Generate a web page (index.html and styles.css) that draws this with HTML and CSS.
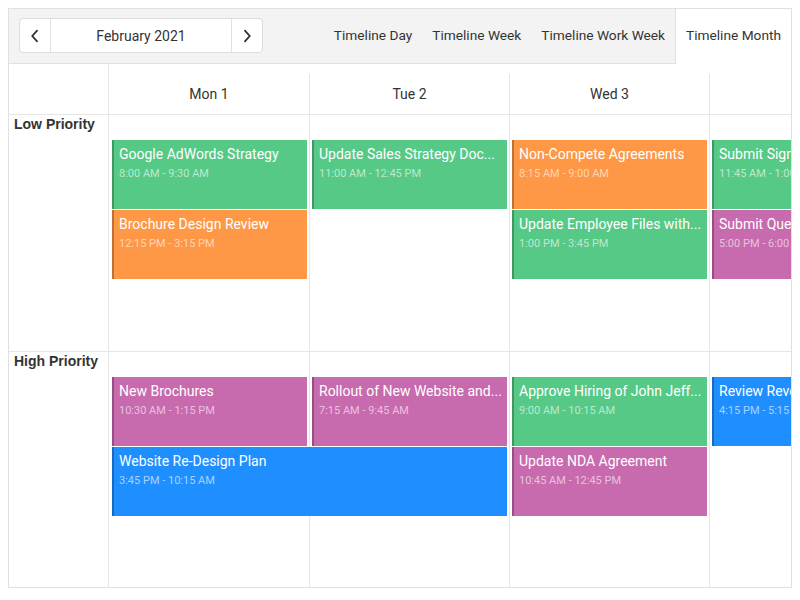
FILE: index.html
```html
<!DOCTYPE html>
<html>
<head>
<meta charset="utf-8">
<link rel="stylesheet" href="styles.css">
</head>
<body>
<div class="scheduler">
  <div class="toolbar">
    <div class="nav">
      <button class="nav-btn" aria-label="Previous">
        <svg width="10" height="14" viewBox="0 0 10 14"><polyline points="7.5,1.2 2.3,7 7.5,12.8" fill="none" stroke="#333" stroke-width="1.8"/></svg>
      </button>
      <div class="nav-label">February 2021</div>
      <button class="nav-btn" aria-label="Next">
        <svg width="10" height="14" viewBox="0 0 10 14"><polyline points="2.5,1.2 7.7,7 2.5,12.8" fill="none" stroke="#333" stroke-width="1.8"/></svg>
      </button>
    </div>
    <div class="views">
      <div class="view">Timeline Day</div>
      <div class="view">Timeline Week</div>
      <div class="view">Timeline Work Week</div>
      <div class="view active">Timeline Month</div>
    </div>
  </div>

  <div class="header">
    <div class="corner"></div>
    <div class="day">Mon 1</div>
    <div class="day">Tue 2</div>
    <div class="day">Wed 3</div>
    <div class="day">Thu 4</div>
    <div class="day">Fri 5</div>
  </div>

  <div class="body">
    <div class="row">
      <div class="res">Low Priority</div>
      <div class="cell c-mon"></div>
      <div class="cell c-tue"></div>
      <div class="cell c-wed"></div>
      <div class="cell c-thu"></div>
      <div class="cell c-fri"></div>

      <div class="event green c-mon s1"><div class="ev-title">Google AdWords Strategy</div><div class="ev-time">8:00 AM - 9:30 AM</div></div>
      <div class="event orange c-mon s2"><div class="ev-title">Brochure Design Review</div><div class="ev-time">12:15 PM - 3:15 PM</div></div>
      <div class="event green c-tue s1" title="Update Sales Strategy Documents"><div class="ev-title">Update Sales Strategy Doc...</div><div class="ev-time">11:00 AM - 12:45 PM</div></div>
      <div class="event orange c-wed s1"><div class="ev-title">Non-Compete Agreements</div><div class="ev-time">8:15 AM - 9:00 AM</div></div>
      <div class="event green c-wed s2" title="Update Employee Files with New NDA"><div class="ev-title">Update Employee Files with...</div><div class="ev-time">1:00 PM - 3:45 PM</div></div>
      <div class="event green c-thu s1"><div class="ev-title">Submit Signed NDA</div><div class="ev-time">11:45 AM - 1:00 PM</div></div>
      <div class="event purple c-thu s2"><div class="ev-title">Submit Questionnaire</div><div class="ev-time">5:00 PM - 6:00 PM</div></div>
    </div>

    <div class="row">
      <div class="res">High Priority</div>
      <div class="cell c-mon"></div>
      <div class="cell c-tue"></div>
      <div class="cell c-wed"></div>
      <div class="cell c-thu"></div>
      <div class="cell c-fri"></div>

      <div class="event purple c-mon s1"><div class="ev-title">New Brochures</div><div class="ev-time">10:30 AM - 1:15 PM</div></div>
      <div class="event blue span-mon-tue s2"><div class="ev-title">Website Re-Design Plan</div><div class="ev-time">3:45 PM - 10:15 AM</div></div>
      <div class="event purple c-tue s1" title="Rollout of New Website and Marketing Brochures"><div class="ev-title">Rollout of New Website and...</div><div class="ev-time">7:15 AM - 9:45 AM</div></div>
      <div class="event green c-wed s1" title="Approve Hiring of John Jeffers"><div class="ev-title">Approve Hiring of John Jeff...</div><div class="ev-time">9:00 AM - 10:15 AM</div></div>
      <div class="event purple c-wed s2"><div class="ev-title">Update NDA Agreement</div><div class="ev-time">10:45 AM - 12:45 PM</div></div>
      <div class="event blue c-thu s1"><div class="ev-title">Review Revenue Projections</div><div class="ev-time">4:15 PM - 5:15 PM</div></div>
    </div>
  </div>
</div>
</body>
</html>
```

FILE: styles.css
```css
body {
  margin: 8px;
  font-family: Roboto, "Liberation Sans", Arial, sans-serif;
  color: #333;
  background: #fff;
}

.scheduler {
  width: 782px;
  height: 578px;
  border: 1px solid #e0e0e0;
  overflow: hidden;
  display: flex;
  flex-direction: column;
  background: #fff;
}

/* toolbar */
.toolbar {
  flex: none;
  height: 54px;
  background: #f3f3f3;
  border-bottom: 1px solid #e0e0e0;
  display: flex;
  align-items: center;
  padding-left: 10px;
}

.nav {
  display: flex;
  height: 35px;
  box-sizing: border-box;
  border: 1px solid #dcdcdc;
  border-radius: 4px;
  background: #fff;
  margin-top: -1px;
}

.nav-btn {
  width: 30px;
  border: 0;
  background: none;
  padding: 0;
  margin: 0;
  display: flex;
  align-items: center;
  justify-content: center;
}

.nav-label {
  width: 180px;
  border-left: 1px solid #e0e0e0;
  border-right: 1px solid #e0e0e0;
  display: flex;
  align-items: center;
  justify-content: center;
  font-size: 14px;
}

.views {
  margin-left: auto;
  display: flex;
  align-self: stretch;
}

.view {
  padding: 0 10px 2px;
  display: flex;
  align-items: center;
  font-size: 13.7px;
  white-space: nowrap;
}

.view.active {
  background: #fff;
  border-left: 1px solid #e0e0e0;
  margin-bottom: -1px;
  padding-bottom: 3px;
}

/* header */
.header {
  flex: none;
  display: grid;
  grid-template-columns: 100px 201px repeat(4, 200px);
  height: 50px;
  border-bottom: 1px solid #e6e6e6;
}

.corner {
  border-right: 1px solid #e6e6e6;
}

.day {
  margin-top: 10px;
  border-right: 1px solid #e6e6e6;
  display: flex;
  align-items: center;
  justify-content: center;
  font-size: 14px;
  white-space: nowrap;
}

/* body rows */
.body {
  flex: none;
}

.row {
  display: grid;
  grid-template-columns: 100px 201px repeat(4, 200px);
  grid-template-rows: 25px 70px 70px 1fr;
  height: 236px;
  border-bottom: 1px solid #e6e6e6;
}

.res {
  grid-column: 1;
  grid-row: 1 / -1;
  border-right: 1px solid #e6e6e6;
  padding: 0 5px;
  font-family: "Liberation Sans", Arial, sans-serif;
  font-weight: bold;
  font-size: 14px;
  line-height: 18px;
  white-space: nowrap;
}

.cell {
  grid-row: 1 / -1;
  border-right: 1px solid #e6e6e6;
}

.c-mon { grid-column: 2; }
.c-tue { grid-column: 3; }
.c-wed { grid-column: 4; }
.c-thu { grid-column: 5; }
.c-fri { grid-column: 6; }
.span-mon-tue { grid-column: 2 / span 2; }

.s1 { grid-row: 2; }
.s2 { grid-row: 3; }

/* events */
.event {
  width: 195px;
  height: 69px;
  justify-self: end;
  align-self: start;
  margin-right: 3px;
  box-sizing: border-box;
  padding: 5px 4px 0 7px;
  color: #fff;
  box-shadow: inset 2px 0 0 rgba(0, 0, 0, 0.25);
  overflow: hidden;
}

.event.span-mon-tue {
  width: 395px;
}

.ev-title {
  font-size: 14px;
  line-height: 18px;
  white-space: nowrap;
  overflow: hidden;
}

.ev-time {
  margin-top: 1px;
  font-size: 11px;
  line-height: 20px;
  color: rgba(255, 255, 255, 0.6);
  white-space: nowrap;
}

.green { background: #56c986; }
.orange { background: #fe9746; }
.purple { background: #c86aae; }
.blue { background: #1f8fff; }
```
